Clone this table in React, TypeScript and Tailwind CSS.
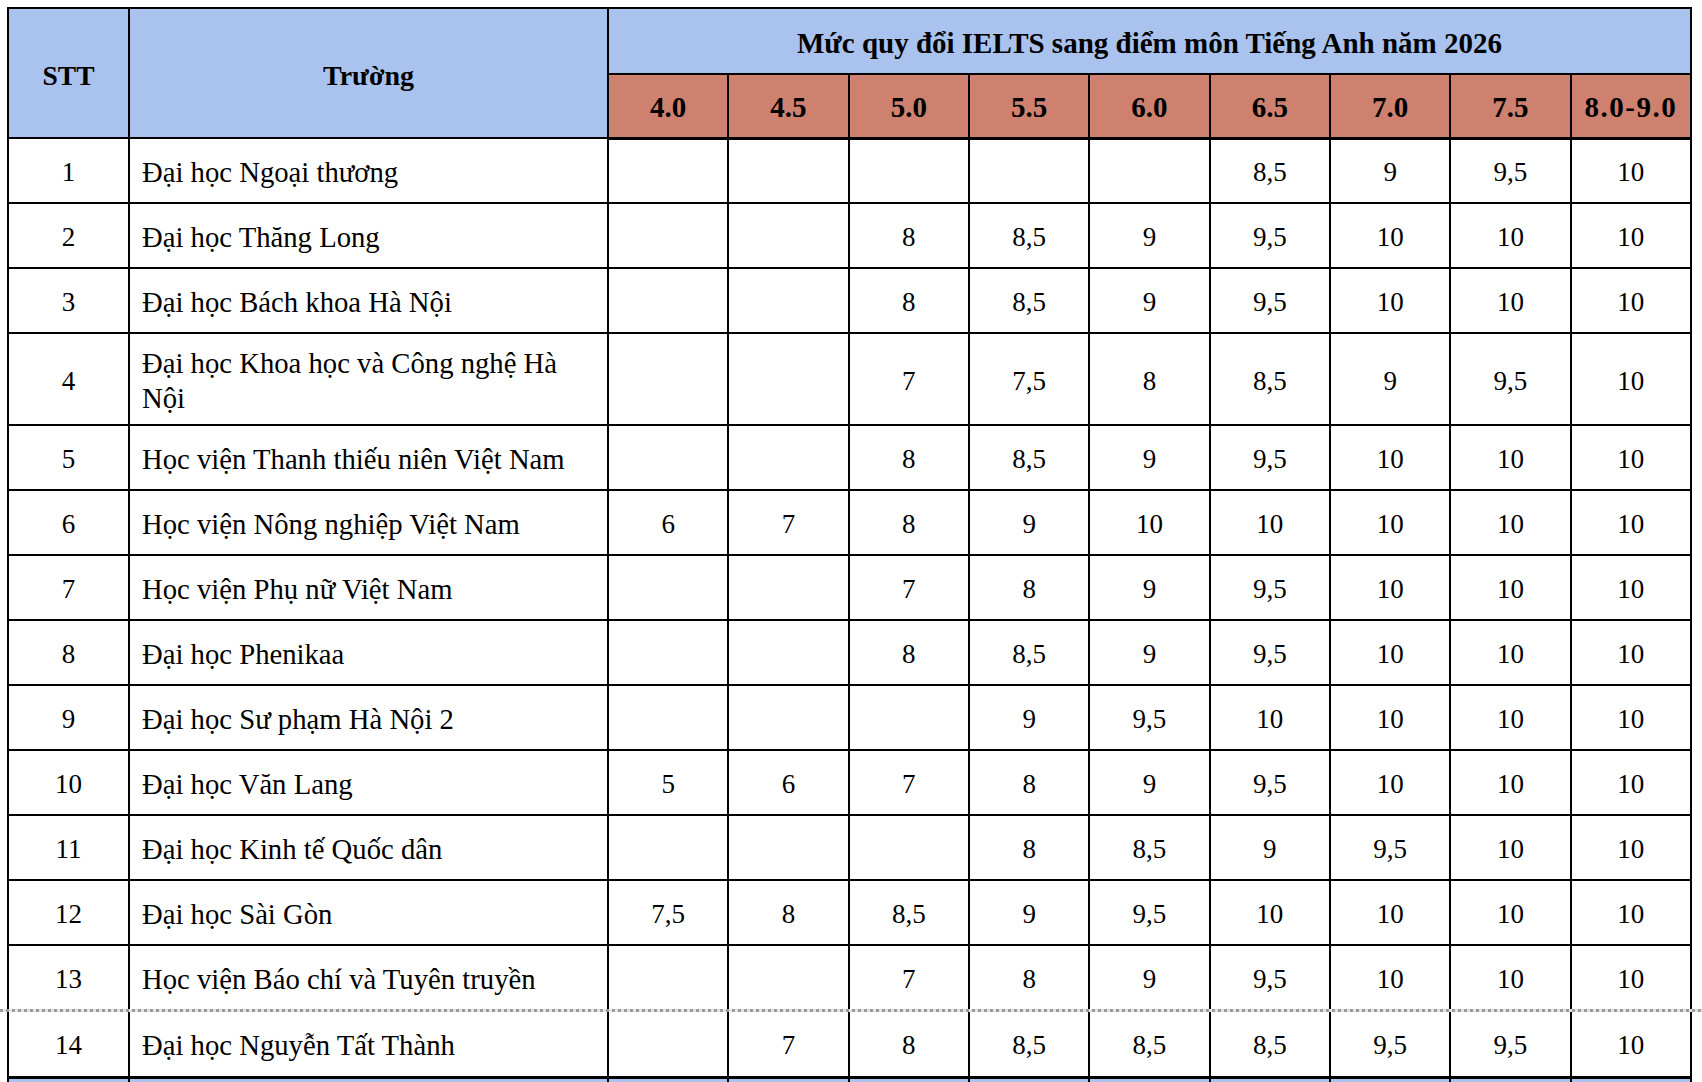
import * as React from "react";

const bands = ["4.0", "4.5", "5.0", "5.5", "6.0", "6.5", "7.0", "7.5", "8.0-9.0"];

type Row = { name: React.ReactNode; scores: string[]; tall?: boolean };

const rows: Row[] = [
  { name: "Đại học Ngoại thương", scores: ["", "", "", "", "", "8,5", "9", "9,5", "10"] },
  { name: "Đại học Thăng Long", scores: ["", "", "8", "8,5", "9", "9,5", "10", "10", "10"] },
  { name: "Đại học Bách khoa Hà Nội", scores: ["", "", "8", "8,5", "9", "9,5", "10", "10", "10"] },
  {
    name: (
      <>
        Đại học Khoa học và Công nghệ Hà
        <br />
        Nội
      </>
    ),
    scores: ["", "", "7", "7,5", "8", "8,5", "9", "9,5", "10"],
    tall: true,
  },
  { name: "Học viện Thanh thiếu niên Việt Nam", scores: ["", "", "8", "8,5", "9", "9,5", "10", "10", "10"] },
  { name: "Học viện Nông nghiệp Việt Nam", scores: ["6", "7", "8", "9", "10", "10", "10", "10", "10"] },
  { name: "Học viện Phụ nữ Việt Nam", scores: ["", "", "7", "8", "9", "9,5", "10", "10", "10"] },
  { name: "Đại học Phenikaa", scores: ["", "", "8", "8,5", "9", "9,5", "10", "10", "10"] },
  { name: "Đại học Sư phạm Hà Nội 2", scores: ["", "", "", "9", "9,5", "10", "10", "10", "10"] },
  { name: "Đại học Văn Lang", scores: ["5", "6", "7", "8", "9", "9,5", "10", "10", "10"] },
  { name: "Đại học Kinh tế Quốc dân", scores: ["", "", "", "8", "8,5", "9", "9,5", "10", "10"] },
  { name: "Đại học Sài Gòn", scores: ["7,5", "8", "8,5", "9", "9,5", "10", "10", "10", "10"] },
  { name: "Học viện Báo chí và Tuyên truyền", scores: ["", "", "7", "8", "9", "9,5", "10", "10", "10"] },
  { name: "Đại học Nguyễn Tất Thành", scores: ["", "7", "8", "8,5", "8,5", "8,5", "9,5", "9,5", "10"] },
];

export default function App() {
  return (
    <div className="relative h-[1082px] w-[1702px] overflow-hidden bg-white pl-[7px] pt-[7px] font-['Liberation_Serif','Times_New_Roman',serif] text-black">
      <table className="w-[1685px] table-fixed border-collapse border-2 border-black text-[27px] leading-[35px]">
        <colgroup>
          <col className="w-[121px]" />
          <col className="w-[479px]" />
          {bands.map((b) => (
            <col key={b} />
          ))}
        </colgroup>
        <thead className="font-bold">
          <tr className="h-[66px] bg-[#a9c3ee]">
            <th rowSpan={2} className="border-2 border-black pt-1 text-center align-middle text-[27.5px]">
              STT
            </th>
            <th rowSpan={2} className="border-2 border-black pt-1 text-center align-middle text-[28px]">
              Trường
            </th>
            <th colSpan={9} className="border-2 border-black pt-1 text-center align-middle text-[29px]">
              Mức quy đổi IELTS sang điểm môn Tiếng Anh năm 2026
            </th>
          </tr>
          <tr className="h-[64px] bg-[#cf8170]">
            {bands.map((b) => (
              <th
                key={b}
                className={
                  b.length > 3
                    ? "border-2 border-b-[3px] border-black pt-1 text-center align-middle text-[29px] tracking-[1.5px]"
                    : "border-2 border-b-[3px] border-black pt-1 text-center align-middle text-[29px]"
                }
              >
                {b}
              </th>
            ))}
          </tr>
        </thead>
        <tbody>
          {rows.map((r, i) => (
            <tr key={i} className={r.tall ? "h-[92px]" : i === rows.length - 1 ? "h-[67px]" : "h-[65px]"}>
              <td className="border-2 border-black pt-1 text-center align-middle">{i + 1}</td>
              <td className="border-2 border-black px-[12px] pt-1 align-middle text-[28.7px]">{r.name}</td>
              {r.scores.map((s, j) => (
                <td key={j} className="border-2 border-black pt-1 text-center align-middle">
                  {s}
                </td>
              ))}
            </tr>
          ))}
          <tr className="h-[65px] bg-[#a9c3ee]">
            <td className="border-2 border-t-[3px] border-black" />
            <td className="border-2 border-t-[3px] border-black" />
            {bands.map((b) => (
              <td key={b} className="border-2 border-t-[3px] border-black" />
            ))}
          </tr>
        </tbody>
      </table>
      {/* page-break seam between rows 13 and 14 */}
      <div className="absolute left-0 top-[1009px] h-[3px] w-[1702px] bg-[repeating-linear-gradient(90deg,#9a9a9a_0_3px,#e2e2e2_3px_6px)]" />
    </div>
  );
}
